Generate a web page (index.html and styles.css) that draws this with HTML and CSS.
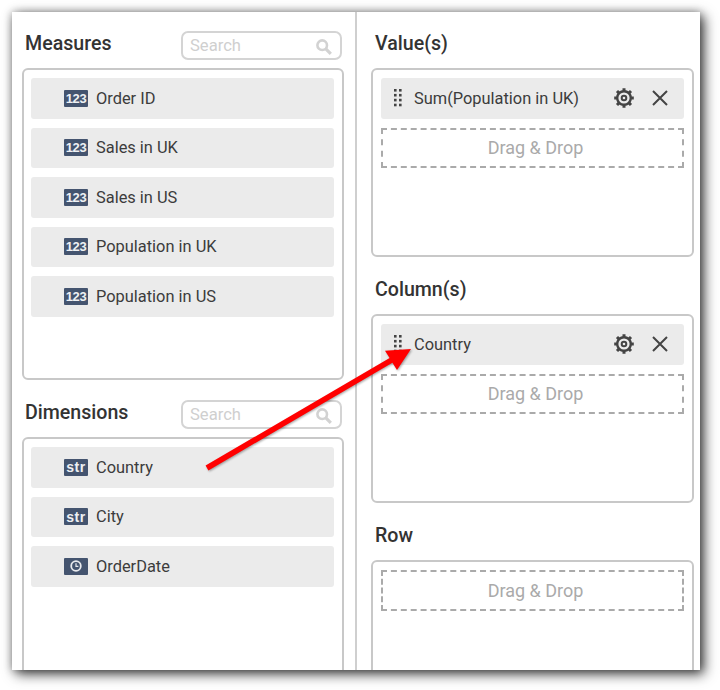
FILE: index.html
```html
<!DOCTYPE html>
<html lang="en">
<head>
  <meta charset="UTF-8">
  <title>Assign Data</title>
  <link rel="stylesheet" href="styles.css">
</head>
<body>
  <svg class="defs" width="0" height="0" aria-hidden="true">
    <symbol id="grip" viewBox="0 0 8 18">
      <g fill="#444">
        <rect x="0" y="0" width="2.6" height="2.6"/><rect x="5" y="0" width="2.6" height="2.6"/>
        <rect x="0" y="4.9" width="2.6" height="2.6"/><rect x="5" y="4.9" width="2.6" height="2.6"/>
        <rect x="0" y="9.8" width="2.6" height="2.6"/><rect x="5" y="9.8" width="2.6" height="2.6"/>
        <rect x="0" y="14.7" width="2.6" height="2.6"/><rect x="5" y="14.7" width="2.6" height="2.6"/>
      </g>
    </symbol>
    <symbol id="gear" viewBox="0 0 20 20">
      <g fill="none" stroke="#444">
        <circle cx="10" cy="10" r="6.8" stroke-width="2.4"/>
        <circle cx="10" cy="10" r="2.3" stroke-width="2"/>
        <path stroke-width="3" d="M10 .2v3M10 16.8v3M.2 10h3M16.8 10h3M3 3l2.1 2.1M14.9 14.9L17 17M3 17l2.1-2.1M14.9 5.1L17 3"/>
      </g>
    </symbol>
    <symbol id="close" viewBox="0 0 16 16">
      <path fill="none" stroke="#444" stroke-width="2" d="M1 1l14 14M15 1L1 15"/>
    </symbol>
    <symbol id="lens" viewBox="0 0 16 16">
      <circle cx="6.2" cy="6.2" r="4.8" fill="none" stroke="#d2d2d2" stroke-width="2.6"/>
      <path fill="none" stroke="#d2d2d2" stroke-width="3.2" d="M9.8 9.8l5 5"/>
    </symbol>
  </svg>

  <div class="card">
    <div class="fields">
      <div class="section-head">
        <h3>Measures</h3>
        <div class="search"><span>Search</span><svg class="lens"><use href="#lens"/></svg></div>
      </div>
      <div class="box tall">
        <div class="item"><span class="badge">123</span>Order ID</div>
        <div class="item"><span class="badge">123</span>Sales in UK</div>
        <div class="item"><span class="badge">123</span>Sales in US</div>
        <div class="item"><span class="badge">123</span>Population in UK</div>
        <div class="item"><span class="badge">123</span>Population in US</div>
      </div>

      <div class="section-head">
        <h3>Dimensions</h3>
        <div class="search"><span>Search</span><svg class="lens"><use href="#lens"/></svg></div>
      </div>
      <div class="box tall">
        <div class="item"><span class="badge str">str</span>Country</div>
        <div class="item"><span class="badge str">str</span>City</div>
        <div class="item">
          <span class="badge">
            <svg class="clock" viewBox="0 0 12 12">
              <circle cx="6" cy="6" r="4.8" fill="none" stroke="#e8eaee" stroke-width="1.8"/>
              <path fill="none" stroke="#e8eaee" stroke-width="1.2" d="M6 3.2V6.4H8.4"/>
            </svg>
          </span>OrderDate
        </div>
      </div>
    </div>

    <div class="slots">
      <div class="section-head"><h3>Value(s)</h3></div>
      <div class="box">
        <div class="item slot">
          <svg class="grip"><use href="#grip"/></svg>
          <span class="name">Sum(Population in UK)</span>
          <svg class="gear"><use href="#gear"/></svg>
          <svg class="close"><use href="#close"/></svg>
        </div>
        <div class="drop">Drag &amp; Drop</div>
      </div>

      <div class="section-head"><h3>Column(s)</h3></div>
      <div class="box">
        <div class="item slot">
          <svg class="grip"><use href="#grip"/></svg>
          <span class="name">Country</span>
          <svg class="gear"><use href="#gear"/></svg>
          <svg class="close"><use href="#close"/></svg>
        </div>
        <div class="drop">Drag &amp; Drop</div>
      </div>

      <div class="section-head"><h3>Row</h3></div>
      <div class="box">
        <div class="drop">Drag &amp; Drop</div>
      </div>
    </div>

    <!-- annotation drawn over the panels -->
    <svg class="arrow" viewBox="0 0 688 658">
      <path fill="#f00" d="M193.6 453.6L377.6 345.9L373 338.7L399 337L385 358L380.4 350.8L196.4 458.4z"/>
    </svg>
  </div>
</body>
</html>
```

FILE: styles.css
```css
* {
  box-sizing: border-box;
}

body {
  margin: 0;
  padding: 12px 20px 20px 12px;
  background: #fff;
  font-family: Roboto, sans-serif;
  color: #3c3c3c;
}

.defs {
  display: block;
}

.card {
  position: relative;
  display: flex;
  width: 688px;
  height: 658px;
  overflow: hidden;
  background: #fff;
  box-shadow: 4px 4px 12px rgba(0, 0, 0, .75), 0 0 8px rgba(0, 0, 0, .3);
}

.fields {
  flex: none;
  width: 345px;
  padding-left: 10px;
  border-right: 2px solid #cfcfcf;
}

.slots {
  padding-left: 14px;
}

.section-head {
  display: flex;
  align-items: center;
  justify-content: space-between;
  height: 57px;
  padding: 7px 2px 0 3px;
}

.slots .section-head {
  padding-left: 4px;
}

.fields .section-head {
  width: 322px;
}

.section-head:first-child {
  height: 56px;
  padding-top: 6px;
}

.section-head h3 {
  margin: 0;
  font-size: 19.6px;
  font-weight: 500;
  color: #333;
}

.search {
  display: flex;
  align-items: center;
  justify-content: space-between;
  width: 161px;
  height: 29px;
  margin-top: 5px;
  padding: 0 8px 0 7px;
  border: 2px solid #d4d4d4;
  border-radius: 7px;
  font-size: 16.6px;
  color: #cfcfcf;
  background: #fff;
}

.section-head + .box + .section-head .search {
  margin-top: 4px;
}

.lens {
  width: 16px;
  height: 16px;
  margin-top: 3px;
}

.box {
  width: 323px;
  height: 189px;
  padding: 8px;
  border: 2px solid #c8c8c8;
  border-radius: 6px;
}

.fields .box {
  width: 322px;
  padding-left: 7px;
}

.box.tall {
  height: 312px;
}

.item {
  display: flex;
  align-items: center;
  height: 40.5px;
  margin-bottom: 9px;
  padding-left: 33px;
  background: #ebebeb;
  border-radius: 3px;
  font-size: 16.4px;
}

.badge {
  display: flex;
  align-items: center;
  justify-content: center;
  width: 24px;
  height: 17px;
  margin-right: 8px;
  border-radius: 1px;
  background: #44546f;
  color: #eef0f3;
  font-family: "Liberation Sans", sans-serif;
  font-size: 13px;
  font-weight: 700;
  letter-spacing: -.4px;
}

.badge.str {
  font-size: 14px;
  letter-spacing: .5px;
}

.clock {
  width: 12px;
  height: 12px;
}

.slot {
  padding-left: 13px;
  padding-right: 16px;
}

.grip {
  width: 8px;
  height: 18px;
  margin-right: 12px;
}

.name {
  flex: 1;
}

.gear {
  width: 20px;
  height: 20px;
  margin-right: 18px;
}

.close {
  width: 16px;
  height: 16px;
}

.drop {
  display: flex;
  align-items: center;
  justify-content: center;
  height: 40.5px;
  padding-left: 6px;
  border: 2px dashed #aaa;
  font-size: 18px;
  color: #aaa;
}

.arrow {
  position: absolute;
  top: 0;
  left: 0;
  width: 688px;
  height: 658px;
  filter: drop-shadow(1px 1px 1px rgba(0, 0, 0, .35));
}
```
